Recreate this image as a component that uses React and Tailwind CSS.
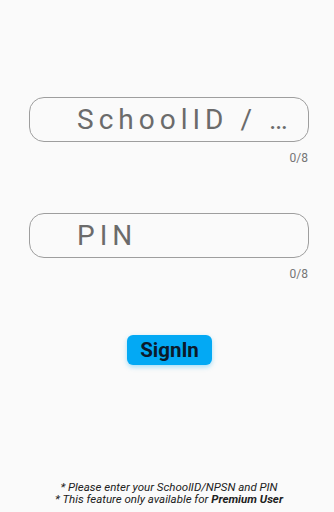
import React from "react";

const Field = ({ label }) => (
  <div className="flex flex-col">
    <div className="h-[45px] rounded-[15px] border border-[#9e9e9e] flex items-center pl-[47px] pr-[14px] overflow-hidden">
      <span className="text-[28px] leading-none tracking-[5px] text-[#6b6b6b] whitespace-nowrap">
        {label}
      </span>
    </div>
    <div className="self-end pt-[9px] pr-px text-[12px] leading-[14px] text-[#757575]">0/8</div>
  </div>
);

export default function App() {
  return (
    <div
      className="w-[334px] h-[512px] bg-[#fafafa] flex flex-col"
      style={{ fontFamily: "Roboto, 'Liberation Sans', sans-serif" }}
    >
      <div className="pt-[97px] px-[29px] pr-[25px] flex flex-col gap-[48px]">
        <Field label="SchoolID / …" />
        <Field label="PIN" />
      </div>

      <div className="flex justify-center pt-[54px] pl-[5px]">
        <button className="h-[30px] px-[13px] rounded-[6px] bg-[#03a9f4] text-[#0b1a2b] text-[20.5px] leading-none font-bold shadow-[0_2px_5px_rgba(3,169,244,0.35)]">
          SignIn
        </button>
      </div>

      <div className="mt-auto pb-[7px] pl-[4px] text-center text-[11.5px] leading-[12px] italic text-[#212121]">
        <p>* Please enter your SchoolID/NPSN and PIN</p>
        <p>
          * This feature only available for <span className="font-bold">Premium User</span>
        </p>
      </div>
    </div>
  );
}
